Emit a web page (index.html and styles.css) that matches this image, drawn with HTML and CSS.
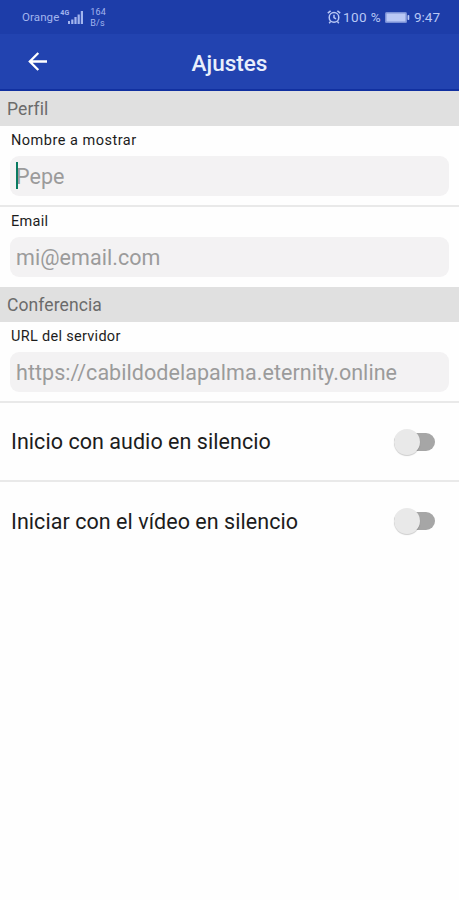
FILE: index.html
```html
<!DOCTYPE html>
<html lang="es">
<head>
    <meta charset="UTF-8">
    <title>Ajustes</title>
    <link rel="stylesheet" href="styles.css">
</head>
<body>
    <div class="status-bar">
        <span class="carrier">Orange</span>
        <span class="network">4G</span>
        <svg class="signal" width="16" height="13" viewBox="0 0 16 13">
            <path d="M0 10h2v3H0zM3.2 8.5h2.2V13H3.2zM6.4 6h2.2v7H6.4zM9.6 3.5h2.2V13H9.6zM12.8 0H15v13h-2.2z" fill="currentColor"/>
        </svg>
        <span class="speed">164<br>B/s</span>
        <div class="status-right">
            <svg class="alarm" width="14" height="14" viewBox="0 0 14 14" fill="none" stroke="currentColor" stroke-width="1.5">
                <circle cx="7" cy="7.4" r="4.8"/>
                <path d="M7 4.8v2.8l2 1.3M.8 3.2L3.6.9M13.2 3.2L10.4.9M3.6 11.4l-1.4 1.8M10.4 11.4l1.4 1.8"/>
            </svg>
            <span class="percent">100 %</span>
            <svg class="battery" width="25" height="11" viewBox="0 0 25 11">
                <rect x="0" y="0" width="22" height="11" rx="1.5" fill="currentColor" opacity="0.6"/>
                <rect x="1.5" y="1.5" width="19" height="8" fill="currentColor"/>
                <rect x="22.5" y="3" width="1.8" height="5" rx="0.8" fill="currentColor"/>
            </svg>
            <span class="time">9:47</span>
        </div>
    </div>

    <div class="header">
        <svg class="back" width="20" height="19" viewBox="0 0 20 19" fill="none" stroke="#fff" stroke-width="2.3">
            <path d="M19 9.5H2M10.3 1L1.8 9.5l8.5 8.5"/>
        </svg>
        <h1>Ajustes</h1>
    </div>

    <h2>Perfil</h2>
    <div class="item">
        <div class="label label-wide">Nombre a mostrar</div>
        <div class="field"><span class="cursor"></span><span>Pepe</span></div>
    </div>
    <div class="item item-last">
        <div class="label">Email</div>
        <div class="field"><span>mi@email.com</span></div>
    </div>

    <h2>Conferencia</h2>
    <div class="item">
        <div class="label">URL del servidor</div>
        <div class="field"><span>https://cabildodelapalma.eternity.online</span></div>
    </div>
    <div class="row">
        <span>Inicio con audio en silencio</span>
        <div class="switch"><div class="thumb"></div></div>
    </div>
    <div class="row row-last">
        <span>Iniciar con el vídeo en silencio</span>
        <div class="switch"><div class="thumb"></div></div>
    </div>
</body>
</html>
```
FILE: styles.css
```css
* {
    box-sizing: border-box;
}

body {
    margin: 0;
    background-color: #fefefe;
    font-family: Roboto, sans-serif;
    color: #1c1c1c;
}

.status-bar {
    display: flex;
    align-items: center;
    height: 34px;
    padding: 0 19px 0 22px;
    background-color: #1d3da9;
    color: #a3b5ee;
    white-space: nowrap;
}

.carrier {
    font-size: 11.5px;
    letter-spacing: 0.1px;
}

.network {
    align-self: flex-start;
    margin: 9px 0 0 1px;
    font-size: 7px;
    line-height: 8px;
    font-weight: bold;
}

.signal {
    margin-left: -1px;
}

.speed {
    margin-left: 6px;
    padding-top: 1px;
    font-size: 9px;
    line-height: 11px;
    letter-spacing: 0.2px;
}

.status-right {
    display: flex;
    align-items: center;
    margin-left: auto;
    color: #b9c8f5;
    font-size: 13.5px;
}

.percent {
    margin-left: 2px;
    letter-spacing: 0.4px;
}

.battery {
    margin-left: 4px;
}

.time {
    margin-left: 4px;
}

.header {
    display: grid;
    grid-template-columns: 20px 1fr 20px;
    align-items: center;
    height: 57px;
    padding: 0 28px;
    background-color: #2243b0;
    border-bottom: 2px solid #1130a0;
}

h1 {
    margin: 3px 0 0;
    text-align: center;
    font-size: 22.5px;
    font-weight: 500;
    color: #e9effc;
}

h2 {
    margin: 0;
    height: 35px;
    padding-left: 7px;
    background-color: #e0e0e0;
    font-size: 17.5px;
    line-height: 36px;
    font-weight: normal;
    letter-spacing: 0.1px;
    color: #6b6b6b;
}

.item {
    height: 81px;
    padding: 6px 10px 0;
    border-bottom: 2px solid #e9e9e9;
}

.item-last {
    height: 80px;
    border-bottom: none;
}

.label {
    height: 24px;
    padding-left: 1px;
    font-size: 14.5px;
    line-height: 18px;
    letter-spacing: 0.3px;
}

.label-wide {
    letter-spacing: 0.5px;
}

.field {
    display: flex;
    align-items: center;
    position: relative;
    height: 40px;
    padding: 1px 6px 0;
    border-radius: 9px;
    background-color: #f3f2f3;
    font-size: 21.5px;
    letter-spacing: 0.05px;
    color: #9b9b9b;
}

/* text caret over the first letter */
.cursor {
    position: absolute;
    left: 6px;
    top: 6px;
    width: 2px;
    height: 27px;
    background-color: #087a61;
}

.row {
    display: flex;
    align-items: center;
    justify-content: space-between;
    height: 79px;
    padding: 0 24px 0 11px;
    border-bottom: 2px solid #e9e9e9;
    font-size: 21.5px;
    letter-spacing: 0.05px;
}

.row-last {
    height: 78px;
    border-bottom: none;
}

.switch {
    display: flex;
    align-items: center;
    width: 41px;
    height: 18px;
    border-radius: 9px;
    background-color: #a6a6a6;
}

.thumb {
    width: 26px;
    height: 26px;
    border-radius: 50%;
    background-color: #e9e9e9;
    box-shadow: 0 1px 1px rgba(0, 0, 0, 0.2);
}
```
